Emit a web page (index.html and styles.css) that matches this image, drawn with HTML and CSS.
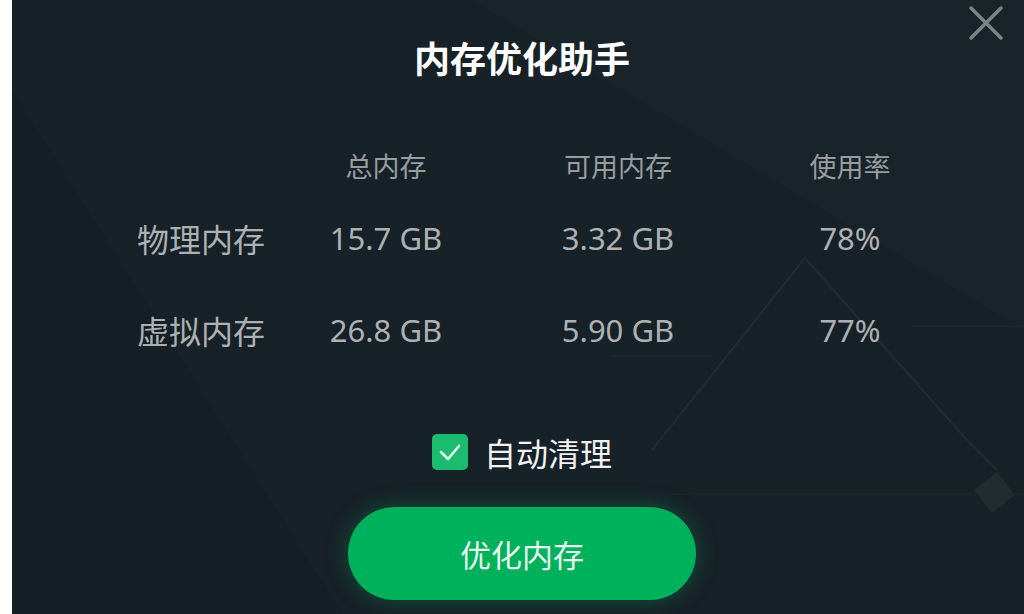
FILE: index.html
```html
<!DOCTYPE html>
<html lang="zh-CN">
<head>
    <meta charset="UTF-8">
    <meta name="viewport" content="width=device-width, initial-scale=1.0">
    <title>内存优化助手</title>
    <link rel="stylesheet" href="styles.css">
</head>
<body>
    <div class="edge"></div>
    <div class="panel">
        <!-- faint background lines -->
        <svg class="deco" width="1012" height="614" viewBox="0 0 1012 614">
            <polygon points="460,0 1012,0 1012,330" fill="#1b262c" opacity="0.5"/>
            <polygon points="0,90 0,614 330,614" fill="#131c21" opacity="0.45"/>
            <polyline points="640,450 793,258 955,440 985,470" fill="none" stroke="#222c31" stroke-width="2"/>
            <line x1="598" y1="356" x2="700" y2="356" stroke="#1f292e" stroke-width="1.5"/>
            <line x1="900" y1="326" x2="1012" y2="326" stroke="#1f292e" stroke-width="1.5"/>
            <line x1="660" y1="494" x2="1012" y2="494" stroke="#1e282d" stroke-width="1.5"/>
            <polygon points="962,490 985,472 1003,495 980,513" fill="#212b30"/>
        </svg>

        <button class="close-btn" aria-label="关闭">
            <svg width="36" height="36" viewBox="0 0 36 36">
                <path d="M3 3 L33 33 M33 3 L3 33" stroke="#7b8588" stroke-width="3.5" stroke-linecap="round"/>
            </svg>
        </button>

        <h1 class="title">内存优化助手</h1>

        <div class="table">
            <div class="row row-head">
                <span></span>
                <span class="cell">总内存</span>
                <span class="cell">可用内存</span>
                <span class="cell">使用率</span>
            </div>
            <div class="row row-data">
                <span class="label">物理内存</span>
                <span class="cell">15.7 GB</span>
                <span class="cell">3.32 GB</span>
                <span class="cell">78%</span>
            </div>
            <div class="row row-data">
                <span class="label">虚拟内存</span>
                <span class="cell">26.8 GB</span>
                <span class="cell">5.90 GB</span>
                <span class="cell">77%</span>
            </div>
        </div>

        <label class="auto-clean">
            <span class="check">
                <svg width="36" height="36" viewBox="0 0 36 36">
                    <path d="M9 18 L16 25 L27 12" fill="none" stroke="#e6f7ee" stroke-width="2.6" stroke-linecap="round" stroke-linejoin="round"/>
                </svg>
            </span>
            <span>自动清理</span>
        </label>

        <button class="optimize-btn">优化内存</button>
    </div>
</body>
</html>
```

FILE: styles.css
```css
body {
    margin: 0;
    padding: 0;
    display: flex;
    width: 1024px;
    height: 614px;
    overflow: hidden;
    background: #ffffff;
    font-family: "Noto Sans", "Noto Sans CJK SC", sans-serif;
}

.edge {
    width: 12px;
    flex-shrink: 0;
    background: #ffffff;
}

.panel {
    flex: 1;
    position: relative;
    display: flex;
    flex-direction: column;
    align-items: center;
    background: #172128;
    overflow: hidden;
}

.deco {
    position: absolute;
    top: 0;
    left: 0;
    z-index: 0;
}

.close-btn {
    position: absolute;
    top: 5px;
    right: 20px;
    width: 36px;
    height: 36px;
    padding: 0;
    border: none;
    background: none;
    cursor: pointer;
    z-index: 2;
}

.title {
    position: relative;
    z-index: 1;
    margin: 35px 0 0 8px;
    font-size: 36px;
    line-height: 44px;
    font-weight: bold;
    color: #ffffff;
    font-family: "Noto Sans CJK SC", sans-serif;
}

.table {
    position: relative;
    z-index: 1;
    align-self: flex-start;
    margin: 66px 0 0 125px;
}

.row {
    display: grid;
    grid-template-columns: 133px 232px 232px 232px;
    align-items: center;
}

.row-head {
    height: 40px;
    margin-bottom: 23px;
    font-size: 27px;
    color: #989da0;
}

.row-data {
    height: 60px;
    font-size: 31px;
    color: #aeb1b3;
}

.row-data + .row-data {
    margin-top: 32px;
}

.cell {
    text-align: center;
    white-space: nowrap;
}

.label {
    white-space: nowrap;
    font-size: 32px;
    font-family: "Noto Sans CJK SC", sans-serif;
}

.auto-clean {
    position: relative;
    z-index: 1;
    display: flex;
    align-items: center;
    gap: 16px;
    height: 40px;
    margin: 72px 0 0 8px;
    font-size: 32px;
    color: #f2f2f2;
    font-family: "Noto Sans CJK SC", sans-serif;
}

.check {
    width: 36px;
    height: 36px;
    border-radius: 5px;
    background: #1bbb70;
    display: flex;
}

.optimize-btn {
    position: relative;
    z-index: 1;
    width: 348px;
    height: 93px;
    margin: 35px 0 0 8px;
    border: none;
    border-radius: 47px;
    background: #00b15b;
    color: #e9f6ef;
    font-size: 31px;
    font-family: "Noto Sans CJK SC", sans-serif;
    box-shadow: 0 0 22px rgba(0, 177, 91, 0.35);
    cursor: pointer;
}
```
